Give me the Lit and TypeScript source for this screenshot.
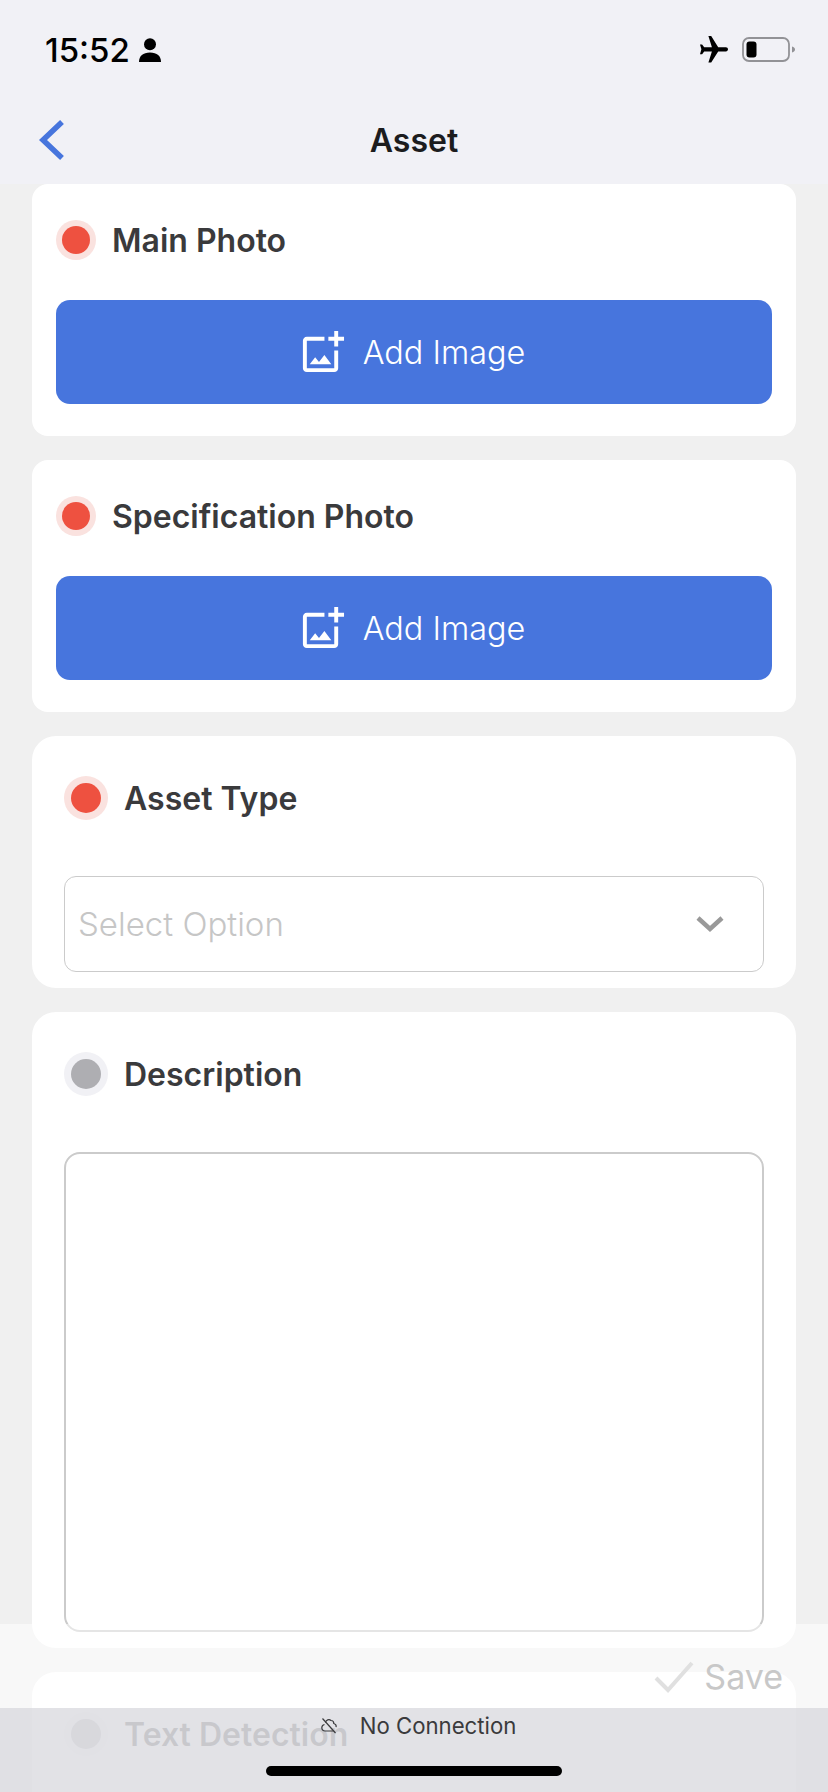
import { LitElement, html, css, svg } from "lit";
import { customElement } from "lit/decorators.js";

const addIcon = html`<svg class="add-icon" viewBox="0 0 24 24" fill="#fff"><path d="M18 20H4V6h9V4H4c-1.1 0-2 .9-2 2v14c0 1.1.9 2 2 2h14c1.1 0 2-.9 2-2v-9h-2v9zm-7.79-3.17l-1.96-2.36L5.5 18h11l-3.54-4.71zM20 4V1h-2v3h-3c.01.01 0 2 0 2h3v2.99c.01.01 2 0 2 0V6h3V4h-3z"/></svg>`;

@customElement("app-root")
export class AppRoot extends LitElement {
  static styles = css`
    :host {
      display: block;
      position: relative;
      width: 828px;
      height: 1792px;
      overflow: hidden;
      background: #f0f0f0;
      font-family: Inter, "Liberation Sans", sans-serif;
    }
    .header {
      height: 184px;
      background: #f1f1f6;
      display: flex;
      flex-direction: column;
    }
    .status {
      height: 96px;
      box-sizing: border-box;
      padding: 4px 32px 0 45px;
      display: flex;
      align-items: center;
      color: #000;
    }
    .time {
      font-size: 33px;
      font-weight: 500;
      line-height: 40px;
    }
    .person {
      width: 22px;
      height: 24px;
      margin-left: 9px;
    }
    .spacer {
      flex: 1;
    }
    .plane {
      width: 30px;
      height: 28px;
      margin-right: 13px;
    }
    .battery {
      width: 54px;
      height: 26px;
    }
    .nav {
      flex: 1;
      display: grid;
      grid-template-columns: 1fr auto 1fr;
      align-items: center;
      padding: 0 38px;
    }
    .back {
      width: 28px;
      height: 42px;
    }
    .title {
      font-size: 32px;
      font-weight: 600;
      color: #1c1c1e;
      line-height: 40px;
      padding-top: 2px;
    }
    .content {
      display: flex;
      flex-direction: column;
      gap: 24px;
      padding: 0 32px;
    }
    .card {
      background: #fff;
    }
    .card.small {
      border-radius: 16px;
      padding: 36px 24px 32px;
    }
    .card.large {
      border-radius: 24px;
      padding: 40px 32px 16px;
    }
    .head {
      display: flex;
      align-items: center;
      color: #3a3a3c;
      font-weight: 600;
      font-size: 32px;
      line-height: 40px;
    }
    .head span:last-child {
      padding-top: 2px;
    }
    .small .head {
      gap: 16px;
      height: 40px;
      margin-bottom: 40px;
    }
    .large .head {
      gap: 16px;
      height: 44px;
      margin-bottom: 56px;
    }
    .ring {
      display: flex;
      align-items: center;
      justify-content: center;
      border-radius: 50%;
      box-sizing: border-box;
      flex: none;
    }
    .small .ring {
      width: 40px;
      height: 40px;
    }
    .large .ring {
      width: 44px;
      height: 44px;
    }
    .ring.red {
      background: #fae2df;
    }
    .ring.grey {
      background: #f1f1f5;
    }
    .ring i {
      display: block;
      border-radius: 50%;
    }
    .small .ring i {
      width: 28px;
      height: 28px;
    }
    .large .ring i {
      width: 30px;
      height: 30px;
    }
    .ring.red i {
      background: #ee5140;
    }
    .ring.grey i {
      background: #aeaeb2;
    }
    .button {
      height: 104px;
      border-radius: 14px;
      background: #4775dd;
      display: flex;
      align-items: center;
      justify-content: center;
      gap: 17px;
      padding-right: 4px;
      color: #fff;
      font-size: 32.4px;
      font-weight: 300;
    }
    .add-icon {
      width: 47px;
      height: 47px;
    }
    .select {
      height: 96px;
      box-sizing: border-box;
      border: 1.5px solid #cbcbcb;
      border-radius: 12px;
      padding: 0 39px 0 13px;
      display: flex;
      align-items: center;
      justify-content: space-between;
      color: #c6c6c6;
      font-size: 33px;
      font-weight: 300;
    }
    .chevron {
      width: 28px;
      height: 18px;
    }
    .textarea {
      height: 480px;
      box-sizing: border-box;
      border: 2px solid #cbcbcb;
      border-radius: 16px;
    }
    .savebar {
      position: absolute;
      left: 0;
      right: 0;
      top: 1624px;
      height: 84px;
      background: rgba(255, 255, 255, 0.5);
      display: flex;
      align-items: flex-start;
      justify-content: flex-end;
      box-sizing: border-box;
      padding: 33px 45px 0 0;
      gap: 10px;
      color: #c8c8c8;
      font-size: 34px;
      font-weight: 400;
      line-height: 40px;
    }
    .check {
      width: 40px;
      height: 32px;
      margin-top: 4px;
    }
    .offline {
      position: absolute;
      left: 0;
      right: 0;
      top: 1708px;
      height: 84px;
      background: rgba(222, 222, 226, 0.87);
      display: flex;
      flex-direction: column;
      align-items: center;
    }
    .conn {
      display: flex;
      align-items: center;
      gap: 23px;
      height: 36px;
      margin-left: 9px;
      font-size: 22.2px;
      line-height: 36px;
      color: #3a3a3c;
    }
    .cloud {
      width: 16px;
      height: 18px;
    }
    .home {
      width: 296px;
      height: 10px;
      border-radius: 5px;
      background: #000;
      margin-top: 22px;
    }
  `;

  private head(label: string, tone: string) {
    return html`<div class="head">
      <span class="ring ${tone}"><i></i></span><span>${label}</span>
    </div>`;
  }

  private photoCard(label: string) {
    return html`<section class="card small">
      ${this.head(label, "red")}
      <div class="button">${addIcon}<span>Add Image</span></div>
    </section>`;
  }

  render() {
    return html`
      <header class="header">
        <div class="status">
          <span class="time">15:52</span>
          <svg class="person" viewBox="0 0 22 24" fill="#000">
            <circle cx="11" cy="6.2" r="6" />
            <path d="M0 24c0-6 4-9.500 11-9.500S22 18 22 24z" />
          </svg>
          <span class="spacer"></span>
          <svg class="plane" viewBox="2 2 20 20" fill="#000">
            ${svg`<path transform="rotate(90 12 12)" d="M21 16v-2l-8-5V3.500c0-.83-.67-1.500-1.500-1.500S10 2.670 10 3.500V9l-8 5v2l8-2.500V19l-2 1.500V22l3.500-1 3.500 1v-1.500L13 19v-5.500l8 2.500z"/>`}
          </svg>
          <svg class="battery" viewBox="0 0 54 26">
            <rect x="1" y="1" width="46" height="23" rx="6" fill="none" stroke="#929296" stroke-width="1.800" />
            <rect x="4.500" y="4.500" width="10" height="16" rx="3" fill="#000" />
            <path d="M50 9.500c2 .5 3 1.800 3 3s-1 2.500-3 3z" fill="#929296" />
          </svg>
        </div>
        <div class="nav">
          <svg class="back" viewBox="0 0 28 42" fill="none">
            <path d="M24 3 5 21l19 18" stroke="#4775dd" stroke-width="5.500" />
          </svg>
          <span class="title">Asset</span>
          <span></span>
        </div>
      </header>
      <main class="content">
        ${this.photoCard("Main Photo")} ${this.photoCard("Specification Photo")}
        <section class="card large">
          ${this.head("Asset Type", "red")}
          <div class="select">
            <span>Select Option</span>
            <svg class="chevron" viewBox="0 0 28 18" fill="none">
              <path d="M2 3l12 11L26 3" stroke="#999" stroke-width="4.500" />
            </svg>
          </div>
        </section>
        <section class="card large">
          ${this.head("Description", "grey")}
          <div class="textarea"></div>
        </section>
        <section class="card large">${this.head("Text Detection", "grey")}</section>
      </main>
      <div class="savebar">
        <svg class="check" viewBox="0 0 40 32" fill="none">
          <path d="M2 17l12 12L38 2" stroke="#e0e0e0" stroke-width="4" />
        </svg>
        <span>Save</span>
      </div>
      <div class="offline">
        <div class="conn">
          <svg class="cloud" viewBox="0 0 16 18" fill="none" stroke="#3a3a3c" stroke-width="1.200">
            <path d="M4.500 5.500C5 3 8 1.800 10 3.500c1.500 0 2.800 1.300 2.800 3 1.800.5 2.700 2 2.200 3.700M12.500 14H4c-2 0-3.200-1.500-3.200-3.200C.8 9 2 7.800 3.500 7.500" />
            <path d="M1.500 1.500 14.500 16" />
          </svg>
          <span>No Connection</span>
        </div>
        <div class="home"></div>
      </div>
    `;
  }
}
